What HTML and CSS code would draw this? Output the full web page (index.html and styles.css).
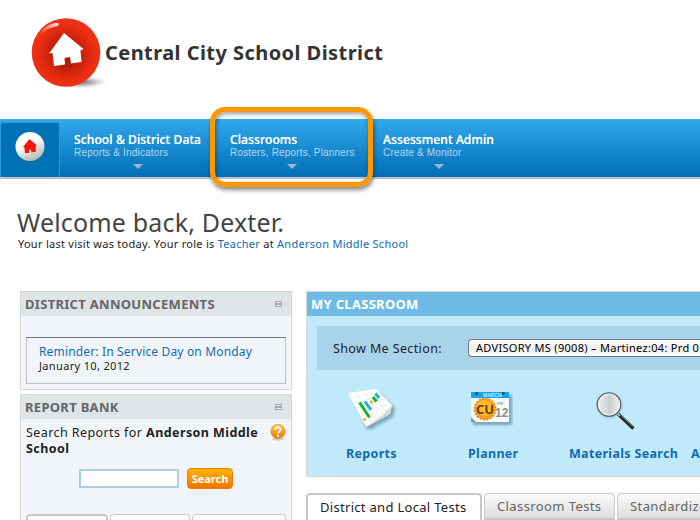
FILE: index.html
```html
<!DOCTYPE html>
<html lang="en">
<head>
<meta charset="utf-8">
<title>Central City School District</title>
<link rel="stylesheet" href="styles.css">
</head>
<body>
<header class="masthead">
  <svg class="logo" width="74" height="74" viewBox="0 0 74 74">
    <defs>
      <radialGradient id="ball" cx="50%" cy="52%" r="50%"><stop offset="0" stop-color="#a81505"/><stop offset=".35" stop-color="#bb1c09"/><stop offset=".75" stop-color="#e62b10"/><stop offset="1" stop-color="#ef3315"/></radialGradient>
      <radialGradient id="shade"><stop offset="0" stop-color="#5d5e6c"/><stop offset=".5" stop-color="#a5a5ae" stop-opacity=".7"/><stop offset="1" stop-color="#fff" stop-opacity="0"/></radialGradient>
      <linearGradient id="glint" x1="1" y1="0" x2="0" y2="1"><stop offset="0" stop-color="#fff"/><stop offset="1" stop-color="#f25a30" stop-opacity=".3"/></linearGradient>
    </defs>
    <ellipse cx="48" cy="65" rx="32" ry="7" fill="url(#shade)"/>
    <circle cx="35" cy="35.500" r="34.300" fill="url(#ball)"/>
    <path d="M8 18C11 11 19 6 26 6c3 0 2 3-1 3.500C18 11 13 14 9 19z" fill="url(#glint)"/>
    <path d="M33 16L52.500 32 49.500 33.500 50.500 45 40 46.500 39 40 33.500 41 34 47.500 23 49 21.500 36 18 36.500z" fill="#fff"/>
  </svg>
  <h1 class="district">Central City School District</h1>
</header>
<nav class="nav">
  <a class="home"><svg width="30" height="30" viewBox="0 0 30 30">
    <defs><linearGradient id="silver" x1=".2" y1="0" x2=".7" y2="1"><stop offset=".4" stop-color="#fff"/><stop offset="1" stop-color="#aeb0b2"/></linearGradient></defs>
    <circle cx="15" cy="14.500" r="14.500" fill="url(#silver)"/>
    <path d="M14.500 7L22 13.500 20.500 14 21 19.500 16.500 20.500 16 17.500 14 18 14 21 10 21 9.500 15.500 8 15z" fill="#f51505"/>
  </svg></a>
  <a class="item data"><b>School &amp; District Data</b><small>Reports &amp; Indicators</small><i></i></a>
  <a class="item rooms"><b>Classrooms</b><small>Rosters, Reports, Planners</small><i></i><span class="highlight"></span></a>
  <a class="item admin"><b>Assessment Admin</b><small>Create &amp; Monitor</small><i></i></a>
</nav>
<section class="welcome">
  <h2>Welcome back, Dexter.</h2>
  <p>Your last visit was today. Your role is <a>Teacher</a> at <a>Anderson Middle School</a></p>
</section>
<main class="columns">
  <div class="side">
    <section class="panel">
      <h3><span>DISTRICT ANNOUNCEMENTS</span><i class="fold"></i></h3>
      <div class="notice"><a>Reminder: In Service Day on Monday</a><p>January 10, 2012</p></div>
    </section>
    <section class="panel bank">
      <h3><span>REPORT BANK</span><i class="fold"></i></h3>
      <div class="scope"><p>Search Reports for <strong>Anderson Middle<br>School</strong></p>
        <svg width="16" height="17" viewBox="0 0 16 17">
          <defs><linearGradient id="amber" x2="0" y2="1"><stop offset="0" stop-color="#ffc549"/><stop offset="1" stop-color="#ec7600"/></linearGradient></defs>
          <ellipse cx="8" cy="15" rx="6" ry="1.500" fill="#d5cdc5"/>
          <circle cx="8" cy="7.500" r="7.200" fill="url(#amber)" stroke="#e98a12" stroke-width=".6"/>
          <path d="M5.300 6C5.300 2.300 10.700 2.500 10.500 5.700 10.400 7.500 8 7.400 8 9.600" fill="none" stroke="#fff" stroke-width="1.900"/><circle cx="8" cy="12" r="1.200" fill="#fff"/>
        </svg></div>
      <div class="search"><input type="text" aria-label="Search reports"><button>Search</button></div>
      <div class="minitabs"><i class="on"></i><i></i><i></i></div>
    </section>
  </div>
  <div class="content">
    <section class="classroom">
      <h3>MY CLASSROOM</h3>
      <div class="section-row"><label>Show Me Section:</label><div class="select"><span>ADVISORY MS (9008) – Martinez:04: Prd 0</span></div></div>
      <div class="tools">
        <a class="tool reports"><svg width="52" height="44" viewBox="0 0 52 44">
          <defs><filter id="soft" x="-30%" y="-30%" width="160%" height="160%"><feGaussianBlur stdDeviation="1.800"/></filter></defs>
          <path d="M7 10L34 5 49 20 47 29 24 42 20 40z" fill="#6e94a5" opacity=".8" filter="url(#soft)"/>
          <path d="M2 5L30 1 46 17 44 26 20 39z" fill="#fff"/>
          <path d="M22 37.500L39 25 46 17 44 26 20 39z" fill="#d6dadc"/>
          <path d="M5 10l28-6M8 15l29-8M11 20l30-10M14 25l30-10M17 30l25-13M19 35l20-12M10 4l16 29M18 3l16 26M25 2l15 22" stroke="#e4e8e9" stroke-width=".7"/>
          <path d="M13.500 14.500L23.500 29.500M27 9l3.500 4.500" stroke="#12b71c" stroke-width="3"/>
          <path d="M19 13.500l6 8.500M29.500 5.500l3.500 4.500" stroke="#18b0ef" stroke-width="3"/>
          <path d="M23.500 14l2 1.800 2-1.800-2-1.800zM16.500 31.500l2 1.800 2-1.800-2-1.800z" fill="#ffa516"/>
        </svg><span>Reports</span></a>
        <a class="tool planner"><svg width="46" height="44" viewBox="0 0 46 44">
          <path d="M6 7H45V37H6z" fill="#678b9b" opacity=".75" filter="url(#soft)"/>
          <path d="M4 4H42V34H8L4 30z" fill="#f7f8f8"/><path d="M4 4H42V10H4z" fill="#16a4ef"/>
          <path d="M4 29l5 5H4z" fill="#8b9193"/><path d="M8.500 4h2.500v3H8.500zM35 4h2.500v3H35z" fill="#2d5368"/>
          <text x="16" y="9" class="cal-month">MARCH</text><text x="30" y="17" class="cal-day">FRI</text><text x="28" y="29" class="cal-date">12</text>
          <circle cx="18" cy="21" r="10.500" fill="#f9a31b" stroke="#e58b15" stroke-width="2" stroke-dasharray="2 1.300"/>
          <circle cx="17" cy="20" r="8" fill="#ffb72d"/>
          <text x="9" y="26" class="cal-logo">CU</text>
        </svg><span>Planner</span></a>
        <a class="tool materials"><svg width="44" height="44" viewBox="0 0 44 44">
          <defs><linearGradient id="lens"><stop offset="0" stop-color="#eef0f1"/><stop offset=".45" stop-color="#d0d4d6"/><stop offset=".5" stop-color="#c7cbce"/><stop offset="1" stop-color="#f3f4f4"/></linearGradient></defs>
          <circle cx="15.500" cy="17.500" r="12" fill="#799eae" opacity=".7" filter="url(#soft)"/>
          <path d="M24 26L39.500 40.500" stroke="#282828" stroke-width="3.400"/><path d="M24 25l15 13.500" stroke="#858b8d" stroke-width=".8"/>
          <path d="M22.500 24l3 4" stroke="#83c8bc" stroke-width="2"/>
          <circle cx="15" cy="16.500" r="11.700" fill="url(#lens)" stroke="#555b5e" stroke-width="1.300"/><circle cx="15" cy="16.500" r="10.600" fill="none" stroke="#fff" stroke-width=".8"/>
        </svg><span>Materials Search</span></a>
        <a class="tool more"><span>A</span></a>
      </div>
    </section>
    <div class="tabs"><a class="tab current"><span>District and Local Tests</span></a><a class="tab class"><span>Classroom Tests</span></a><a class="tab standard"><span>Standardize</span></a></div>
  </div>
</main>
</body>
</html>
```
FILE: styles.css
```css
* { box-sizing: border-box; }
body { margin: 0; width: 700px; height: 520px; overflow: hidden; background: #fff; color: #222; font-family: "Noto Sans", sans-serif; }
h1, h2, h3, p { margin: 0; }
a { color: #126bb0; text-decoration: none; }
svg { display: block; flex: none; }
span, b, small, p { white-space: nowrap; }
.masthead { height: 119px; padding: 17px 0 0 31px; display: flex; }
.district { color: #333; font-size: 20px; line-height: 28px; margin-top: 22px; white-space: nowrap; letter-spacing: .44px; }
.nav { height: 60px; display: flex; background: linear-gradient(#31a8ec, #006eb5); border-bottom: 2px solid #bcc1c5; }
.home { width: 60px; margin-top: 3px; padding: 9px 0 0 14px; border: 1px solid #299cdf; border-bottom: 0; border-radius: 3px 3px 0 0; background: #0071b3; }
.item { position: relative; margin-left: 14px; padding-top: 13px; display: flex; flex-direction: column; color: #fff; }
.item b { font-size: 12px; font-weight: 500; line-height: 16px; letter-spacing: .12px; text-shadow: 0 0 .5px #fff; }
.item small { color: #b2d9f1; font: 10px/10px "Liberation Sans", sans-serif; letter-spacing: .18px; }
.item i { align-self: center; margin-top: 6px; border: 5px solid transparent; border-top-color: #a2b6ca; border-bottom: 0; }
.data { width: 127px; }
.rooms { width: 124px; margin-left: 29px; }
.admin { width: 111px; margin-left: 29px; }
.highlight { position: absolute; left: -20px; top: -12px; width: 163px; height: 80px; border: 5px solid #ff9800; border-radius: 15px; box-shadow: 1px 3px 4px #0007, inset 1px 2px 4px #0006; }
.welcome { height: 112px; padding: 28px 0 0 17px; }
.welcome h2 { color: #444; font-size: 25px; font-weight: 400; line-height: 30px; letter-spacing: .17px; }
.welcome p { font-size: 11px; line-height: 14px; letter-spacing: .27px; padding-left: 1px; }
.columns { display: flex; gap: 14px; padding-left: 20px; }
.side { width: 272px; flex: none; }
.panel { height: 99px; border: 1px solid #d5d8d7; background: #f1f5f9; }
.panel h3 { height: 24px; padding: 0 9px 0 4px; display: flex; align-items: center; justify-content: space-between; background: #dfe4e7; color: #666; font-size: 13px; line-height: 24px; letter-spacing: .3px; }
.fold { width: 7px; height: 6px; border: 1px solid #a3a6a6; background: linear-gradient(#eee 1px, #aaa 1px 3px, #eee 3px); }
.notice { margin: 21px 5px 0; height: 47px; padding: 6px 0 0 12px; border: 1px solid #bec2c4; border-top-color: #737b7e; font-size: 11px; line-height: 14px; letter-spacing: .34px; }
.notice a { display: block; font-size: 12px; line-height: 15px; letter-spacing: .16px; white-space: nowrap; }
.bank { margin-top: 4px; height: 140px; }
.scope { display: flex; justify-content: space-between; padding: 5px 5px 0; font-size: 12.5px; line-height: 16px; letter-spacing: .42px; }
.scope p { padding-top: 1px; }
.search { display: flex; gap: 8px; align-items: center; margin: 11px 0 0 58px; }
.search input { width: 100px; height: 19px; padding: 0; border: 2px solid #acd0e1; background: #fff; border-radius: 0; }
.search button { width: 46px; height: 21px; padding: 0; border: 1px solid #e87c00; border-radius: 4px; background: linear-gradient(#ffb400, #ed7400); color: #fff; font: bold 11px/18px "Noto Sans", sans-serif; }
.minitabs { display: flex; gap: 2px; margin: 25px 5px 0; }
.minitabs i { width: 80px; height: 16px; border: 1px solid #c9c9c9; border-radius: 4px 4px 0 0; background: #fff; }
.minitabs .on { width: 82px; border-width: 2px; }
.minitabs i:last-child { width: 94px; }
.content { width: 394px; flex: none; overflow: hidden; }
.classroom { height: 186px; border: 1px solid #d2d7d8; border-right: 0; background: #c0eafc; }
.classroom h3 { height: 24px; padding-left: 4px; background: #70bae6; color: #fff; font-size: 13px; line-height: 25px; letter-spacing: .3px; }
.section-row { margin: 10px 0 0 10px; padding-left: 16px; height: 44px; background: #a9d3eb; display: flex; align-items: center; font-size: 12.5px; letter-spacing: .38px; }
.section-row label { width: 135px; flex: none; }
.select { flex: 1; height: 18px; padding-left: 7px; border: 1px solid #727a7e; border-right: 0; border-radius: 4px 0 0 4px; background: linear-gradient(#fff, #eee 50%, #fff); color: #000; font-size: 11px; line-height: 16px; letter-spacing: .3px; margin-top: -1px; }
.tools { display: flex; padding: 18px 0 0 39px; }
.tool { display: flex; flex: none; flex-direction: column; gap: 13px; font-size: 12.5px; font-weight: 700; line-height: 18px; letter-spacing: .32px; }
.reports { width: 122px; }
.planner { width: 101px; }
.planner svg { margin-left: -1px; }
.materials { width: 122px; }
.materials svg { margin-left: 25px; }
.more { padding-top: 57px; }
.cal-month { font: bold 5px "Liberation Sans", sans-serif; fill: #c7ecff; letter-spacing: 0; }
.cal-day { font: 4px "Liberation Sans", sans-serif; fill: #777; letter-spacing: 0; }
.cal-date { font: bold 12px "Liberation Sans", sans-serif; fill: #8b8f91; letter-spacing: 0; }
.cal-logo { font: bold 13px "Noto Sans", sans-serif; fill: #674018; letter-spacing: 0; }
.tabs { display: flex; gap: 2px; margin-top: 16px; }
.tab { height: 27px; border: 1px solid #ccc; border-bottom: 2px solid #c8c8c8; border-radius: 4px 4px 0 0; background: linear-gradient(#fafafa, #ddd); color: #666; font-size: 13px; line-height: 25px; letter-spacing: .4px; padding-left: 12px; flex: none; }
.current { width: 176px; border: 2px solid #c8c8c8; border-bottom: 0; background: #fff; color: #222; letter-spacing: .3px; }
.class { width: 131px; }
.standard { width: 83px; border-right: 0; border-top-right-radius: 0; overflow: hidden; }
```
